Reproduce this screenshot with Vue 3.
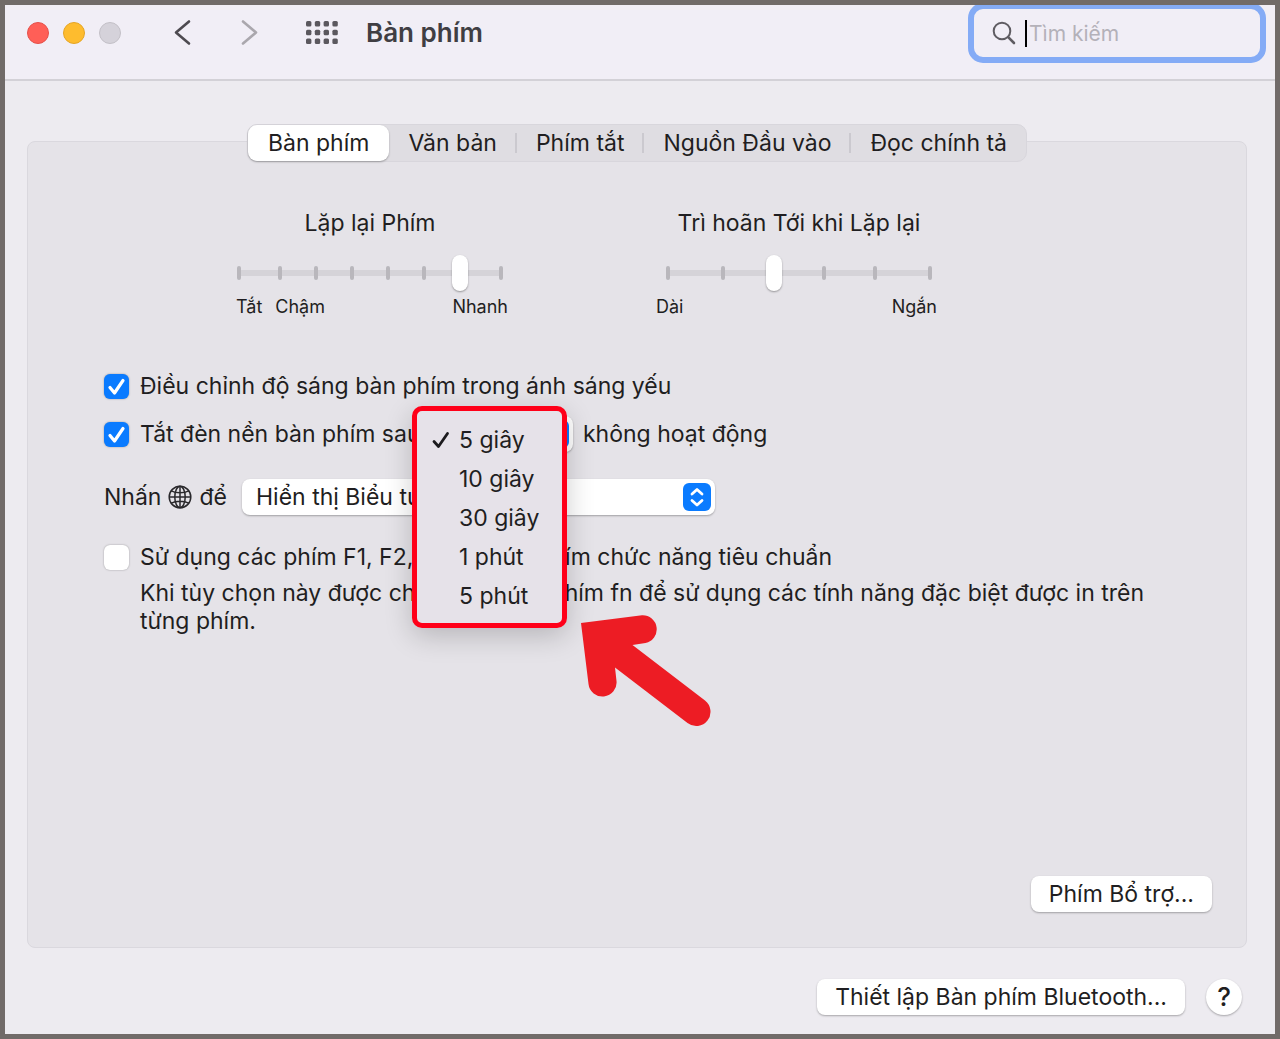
<script setup>
import { ref } from 'vue'

const tabs = ['Bàn phím', 'Văn bản', 'Phím tắt', 'Nguồn Đầu vào', 'Đọc chính tả']
const activeTab = ref(0)

const sliders = ref([
  { id: 'repeat', title: 'Lặp lại Phím', max: 7, value: 6, labels: ['Tắt', 'Chậm', 'Nhanh'] },
  { id: 'delay', title: 'Trì hoãn Tới khi Lặp lại', max: 5, value: 2, labels: ['Dài', 'Ngắn'] },
])

// The thumb travels between 8 and 260 on a 268 wide track; the end ticks sit at the track's ends.
function ticks(max) {
  return Array.from({ length: max + 1 }, (_, i) => {
    if (i === 0) return 3
    if (i === max) return 265
    return Math.round(8 + (i * 252) / max)
  })
}

const durations = ['5 giây', '10 giây', '30 giây', '1 phút', '5 phút']
const duration = ref('5 giây')
const adjustBrightness = ref(true)
const backlightOff = ref(true)
const functionKeys = ref(false)
const query = ref('')
</script>

<template>
  <div class="window">
    <header class="toolbar">
      <div class="lights">
        <button class="light red" aria-label="Đóng"></button>
        <button class="light yellow" aria-label="Thu nhỏ"></button>
        <button class="light gray" aria-label="Phóng to" disabled></button>
      </div>
      <nav class="history">
        <button class="icon-button" aria-label="Quay lại">
          <svg width="20" height="28" viewBox="0 0 20 28"><path d="M16 2.500 L3 13.500 L16 24.500" fill="none" stroke="#4d4a50" stroke-width="2.600" stroke-linecap="round" stroke-linejoin="round" /></svg>
        </button>
        <button class="icon-button" aria-label="Tiếp">
          <svg width="20" height="28" viewBox="0 0 20 28"><path d="M3 2.500 L16 13.500 L3 24.500" fill="none" stroke="#aaa7ad" stroke-width="2.600" stroke-linecap="round" stroke-linejoin="round" /></svg>
        </button>
      </nav>
      <button class="icon-button grid-button" aria-label="Hiển thị tất cả">
        <svg width="32" height="24" viewBox="0 0 32 24" fill="#5b585e">
          <template v-for="row in 3" :key="row">
            <rect v-for="col in 4" :key="col" :x="(col - 1) * 8.8" :y="(row - 1) * 8.8" width="5.400" height="5.400" rx="1.500" />
          </template>
        </svg>
      </button>
      <h1 class="title">Bàn phím</h1>
      <label class="search">
        <svg width="24" height="24" viewBox="0 0 24 24" fill="none" stroke="#5f5c62" stroke-linecap="round"><circle cx="10" cy="10" r="8.300" stroke-width="2" /><path d="M16.200 16.200 L22 22" stroke-width="2.600" /></svg>
        <span class="caret"></span>
        <input v-model="query" type="text" placeholder="Tìm kiếm" aria-label="Tìm kiếm" />
      </label>
    </header>

    <main class="body">
      <div class="tabs" role="tablist">
        <button
          v-for="(tab, i) in tabs"
          :key="tab"
          class="tab"
          :class="{ active: i === activeTab }"
          role="tab"
          :aria-selected="i === activeTab"
          @click="activeTab = i"
        >{{ tab }}</button>
      </div>

      <section class="panel">
        <div class="sliders">
          <div v-for="s in sliders" :key="s.id" class="slider-group" :class="s.id">
            <label class="slider-title" :for="s.id">{{ s.title }}</label>
            <div class="slider">
              <svg viewBox="0 0 268 38" width="100%" height="38">
                <rect x="2" y="16" width="264" height="6" rx="3" fill="#d5d3d8" />
                <rect v-for="x in ticks(s.max)" :key="x" :x="x - 2" y="12" width="4" height="14" rx="2" fill="#b9b7bc" />
              </svg>
              <input :id="s.id" v-model.number="s.value" type="range" min="0" :max="s.max" />
            </div>
            <div class="slider-labels">
              <span v-for="l in s.labels" :key="l">{{ l }}</span>
            </div>
          </div>
        </div>

        <div class="options">
          <div class="row">
            <input id="brightness" v-model="adjustBrightness" class="check" type="checkbox" />
            <label for="brightness">Điều chỉnh độ sáng bàn phím trong ánh sáng yếu</label>
          </div>

          <div class="row second">
            <input id="backlight" v-model="backlightOff" class="check" type="checkbox" />
            <label class="backlight-label" for="backlight">Tắt đèn nền bàn phím sau</label>
            <div class="select-box duration">
              <select v-model="duration" aria-label="Thời gian">
                <option v-for="d in durations" :key="d">{{ d }}</option>
              </select>
              <svg class="stepper" width="28" height="28" viewBox="0 0 28 28"><rect width="28" height="28" rx="6" fill="#0a7bff" /><path d="M9 11 L14 6.500 L19 11 M9 17.500 L14 22 L19 17.500" fill="none" stroke="#fff" stroke-width="2.800" stroke-linecap="round" stroke-linejoin="round" /></svg>
              <div class="menu" role="listbox" aria-label="Thời gian">
                <button
                  v-for="d in durations"
                  :key="d"
                  class="menu-item"
                  role="option"
                  :aria-selected="d === duration"
                  @click="duration = d"
                >
                  <span class="mark">
                    <svg v-if="d === duration" width="18" height="18" viewBox="0 0 18 18"><path d="M2 10.500 L6.500 15.500 L15.500 2.500" fill="none" stroke="#1c1b1e" stroke-width="2.800" stroke-linecap="round" stroke-linejoin="round" /></svg>
                  </span>
                  <span>{{ d }}</span>
                </button>
              </div>
              <svg class="arrow" width="130" height="112" viewBox="581 615 130 112" aria-hidden="true">
                <path d="M581 623 L642 615.300 A14 14 0 0 1 645.500 643 L632.500 645 L705 700.500 A14 14 0 0 1 687.500 723 L615 667.500 L616.500 681 A14 14 0 0 1 588.500 684 Z" fill="#ed1c24" />
              </svg>
            </div>
            <label for="backlight">không hoạt động</label>
          </div>

          <div class="row third">
            <label class="press" for="globe-action">
              Nhấn
              <svg width="24" height="24" viewBox="0 0 24 24" fill="none" stroke="#2a292c" stroke-width="1.500"><circle cx="12" cy="12" r="10.800" /><ellipse cx="12" cy="12" rx="5.200" ry="10.800" /><path d="M12 1 V23 M1 12 H23 M3.300 5.800 C8 8.400 16 8.400 20.700 5.800 M3.300 18.200 C8 15.600 16 15.600 20.700 18.200" /></svg>
              để
            </label>
            <div class="select-box action">
              <select id="globe-action">
                <option>Hiển thị Biểu tượng</option>
              </select>
              <svg class="stepper" width="28" height="28" viewBox="0 0 28 28"><rect width="28" height="28" rx="6" fill="#0a7bff" /><path d="M9 11 L14 6.500 L19 11 M9 17.500 L14 22 L19 17.500" fill="none" stroke="#fff" stroke-width="2.800" stroke-linecap="round" stroke-linejoin="round" /></svg>
            </div>
          </div>

          <div class="row fourth">
            <input id="fkeys" v-model="functionKeys" class="check" type="checkbox" />
            <label class="fkeys-label" for="fkeys">
              <span>Sử dụng các phím F1, F2,</span>
              <span>phím chức năng tiêu chuẩn</span>
            </label>
          </div>
          <p class="hint">
            <span>Khi tùy chọn này được chọn,</span>
            <span>phím fn để sử dụng các tính năng đặc biệt được in trên</span>
            <span>từng phím.</span>
          </p>
        </div>

        <div class="panel-actions">
          <button class="push">Phím Bổ trợ...</button>
        </div>
      </section>
    </main>

    <footer class="footer">
      <button class="push">Thiết lập Bàn phím Bluetooth...</button>
      <button class="help" aria-label="Trợ giúp">?</button>
    </footer>
  </div>
</template>

<style>
body {
  margin: 0;
}
</style>

<style scoped>
.window,
.window * {
  box-sizing: border-box;
}

.window {
  display: flex;
  flex-direction: column;
  min-height: 100vh;
  border: 5px solid #716b69;
  background: #edebf0;
  color: #1f1e21;
  font: 23px/28px Inter, "Liberation Sans", sans-serif;
}

button,
input,
select {
  font: inherit;
  color: inherit;
}

button {
  padding: 0;
  border: 0;
  background: none;
  white-space: nowrap;
}

svg {
  display: block;
}

.toolbar {
  display: flex;
  align-items: center;
  height: 76px;
  padding: 0 9px 18px 22px;
  overflow: hidden;
  border-bottom: 2px solid #d3d1d7;
  background: #f1eef6;
}

.lights {
  display: flex;
  gap: 14px;
}

.light {
  width: 22px;
  height: 22px;
  border: 1px solid;
  border-radius: 50%;
}

.red {
  border-color: #e5504a;
  background: #ff5f57;
}

.yellow {
  border-color: #e5a524;
  background: #febc2e;
}

.gray {
  border-color: #c3c0c7;
  background: #d5d2da;
}

.history {
  display: flex;
  gap: 47px;
  margin-left: 52px;
}

.grid-button {
  margin-left: 46px;
}

.title {
  margin: 0 auto 0 28px;
  font-size: 26px;
  line-height: 32px;
  font-weight: 600;
  color: #403e43;
}

.search {
  display: flex;
  flex: none;
  align-items: center;
  width: 298px;
  height: 60px;
  padding-left: 18px;
  border: 6px solid #84abf6;
  border-radius: 15px;
}

.caret {
  width: 2px;
  height: 27px;
  margin-left: 9px;
  background: #000;
}

.search input {
  flex: 1;
  min-width: 0;
  padding: 2px 0 0 2px;
  border: 0;
  outline: 0;
  background: none;
  font-size: 21px;
}

.search input::placeholder {
  color: #b4b1b9;
  opacity: 1;
}

.body {
  display: flex;
  flex: 1;
  flex-direction: column;
  padding: 43px 28px 0 22px;
}

.tabs {
  position: relative;
  display: flex;
  align-self: center;
  height: 38px;
  border: 1px solid #d8d6dc;
  border-radius: 10px;
  background: #dfdde2;
}

.tab {
  display: flex;
  align-items: center;
  padding: 0 19px;
}

.tab.active {
  padding: 0 20px;
  border-radius: 9px;
  background: #fff;
  box-shadow: 0 1px 2px rgba(0, 0, 0, 0.3);
}

.tab:not(.active) + .tab::before {
  content: "";
  width: 2px;
  height: 20px;
  margin: 0 19px 0 -20px;
  background: #cbc9cf;
}

.panel {
  display: flex;
  flex: 1;
  flex-direction: column;
  margin-top: -21px;
  padding: 67px 34px 35px 76px;
  border: 1px solid #dad8de;
  border-radius: 8px;
  background: #e5e3e8;
}

.sliders {
  display: flex;
  gap: 161px;
  padding-left: 132px;
}

.slider-group {
  width: 268px;
}

.slider-title {
  display: block;
  text-align: center;
}

.slider {
  display: grid;
  margin-top: 17px;
}

.slider svg,
.slider input {
  grid-area: 1 / 1;
}

.slider input {
  width: 100%;
  height: 38px;
  margin: 0;
  appearance: none;
  background: none;
}

.slider input::-webkit-slider-thumb {
  appearance: none;
  width: 16px;
  height: 36px;
  border-radius: 8px;
  background: #fff;
  box-shadow: 0 1px 2px rgba(0, 0, 0, 0.35);
}

.slider-labels {
  display: flex;
  gap: 13px;
  margin: 3px -4px 0 0;
  font-size: 18px;
  line-height: 24px;
}

.slider-labels span:last-child {
  margin-left: auto;
}

.delay .slider-labels {
  margin-left: -9px;
}

.options {
  margin-top: 53px;
}

.row {
  display: flex;
  align-items: center;
  height: 28px;
}

.second {
  margin-top: 20px;
}

.third {
  margin-top: 35px;
}

.fourth {
  margin-top: 32px;
}

.check {
  flex: none;
  width: 25px;
  height: 25px;
  margin: 0 11px 0 0;
  appearance: none;
  border-radius: 6px;
  background: #fff;
  box-shadow: 0 0 2px rgba(0, 0, 0, 0.35);
}

.check:checked {
  background: #0a7bff url("data:image/svg+xml,%3Csvg xmlns='http://www.w3.org/2000/svg' viewBox='0 0 25 25'%3E%3Cpath d='M6 13.500 L10.500 19 L19 6.500' fill='none' stroke='white' stroke-width='3.200' stroke-linecap='round' stroke-linejoin='round'/%3E%3C/svg%3E");
}

.backlight-label {
  width: 281px;
  white-space: nowrap;
}

.select-box {
  position: relative;
  display: flex;
  align-items: center;
  justify-content: flex-end;
  height: 36px;
}

.select-box select {
  width: 100%;
  height: 36px;
  padding: 0 40px 0 14px;
  appearance: none;
  border: 0;
  border-radius: 8px;
  background: #fff;
  box-shadow: 0 1px 2px rgba(0, 0, 0, 0.3);
}

.stepper {
  position: absolute;
  right: 4px;
  pointer-events: none;
}

.duration {
  z-index: 1;
  width: 152px;
  margin-right: 10px;
}

.action {
  width: 473px;
}

.menu {
  position: absolute;
  top: -10px;
  left: -9px;
  width: 155px;
  padding: 9px 0 8px;
  border: 5px solid #ff0019;
  border-radius: 10px;
  background: #e6e2e9;
  box-shadow: 0 8px 28px rgba(0, 0, 0, 0.2);
}

.menu-item {
  display: flex;
  align-items: center;
  width: 100%;
  height: 39px;
  padding-left: 15px;
}

.mark {
  width: 27px;
}

.arrow {
  position: absolute;
  top: 199px;
  left: 160px;
}

.press {
  display: flex;
  align-items: center;
  gap: 7px;
  width: 138px;
}

.fkeys-label {
  display: flex;
  justify-content: space-between;
  width: 692px;
}

.hint {
  display: flex;
  flex-wrap: wrap;
  justify-content: space-between;
  max-width: 1004px;
  margin: 8px 0 0 36px;
}

.panel-actions {
  display: flex;
  justify-content: flex-end;
  margin-top: auto;
}

.push,
.help {
  height: 36px;
  border-radius: 8px;
  background: #fff;
  box-shadow: 0 1px 2px rgba(0, 0, 0, 0.3);
}

.push {
  padding: 0 18px;
}

.footer {
  display: flex;
  justify-content: flex-end;
  gap: 21px;
  padding: 31px 33px 19px;
}

.help {
  width: 36px;
  border-radius: 50%;
  font-size: 26px;
  font-weight: 500;
}
</style>
